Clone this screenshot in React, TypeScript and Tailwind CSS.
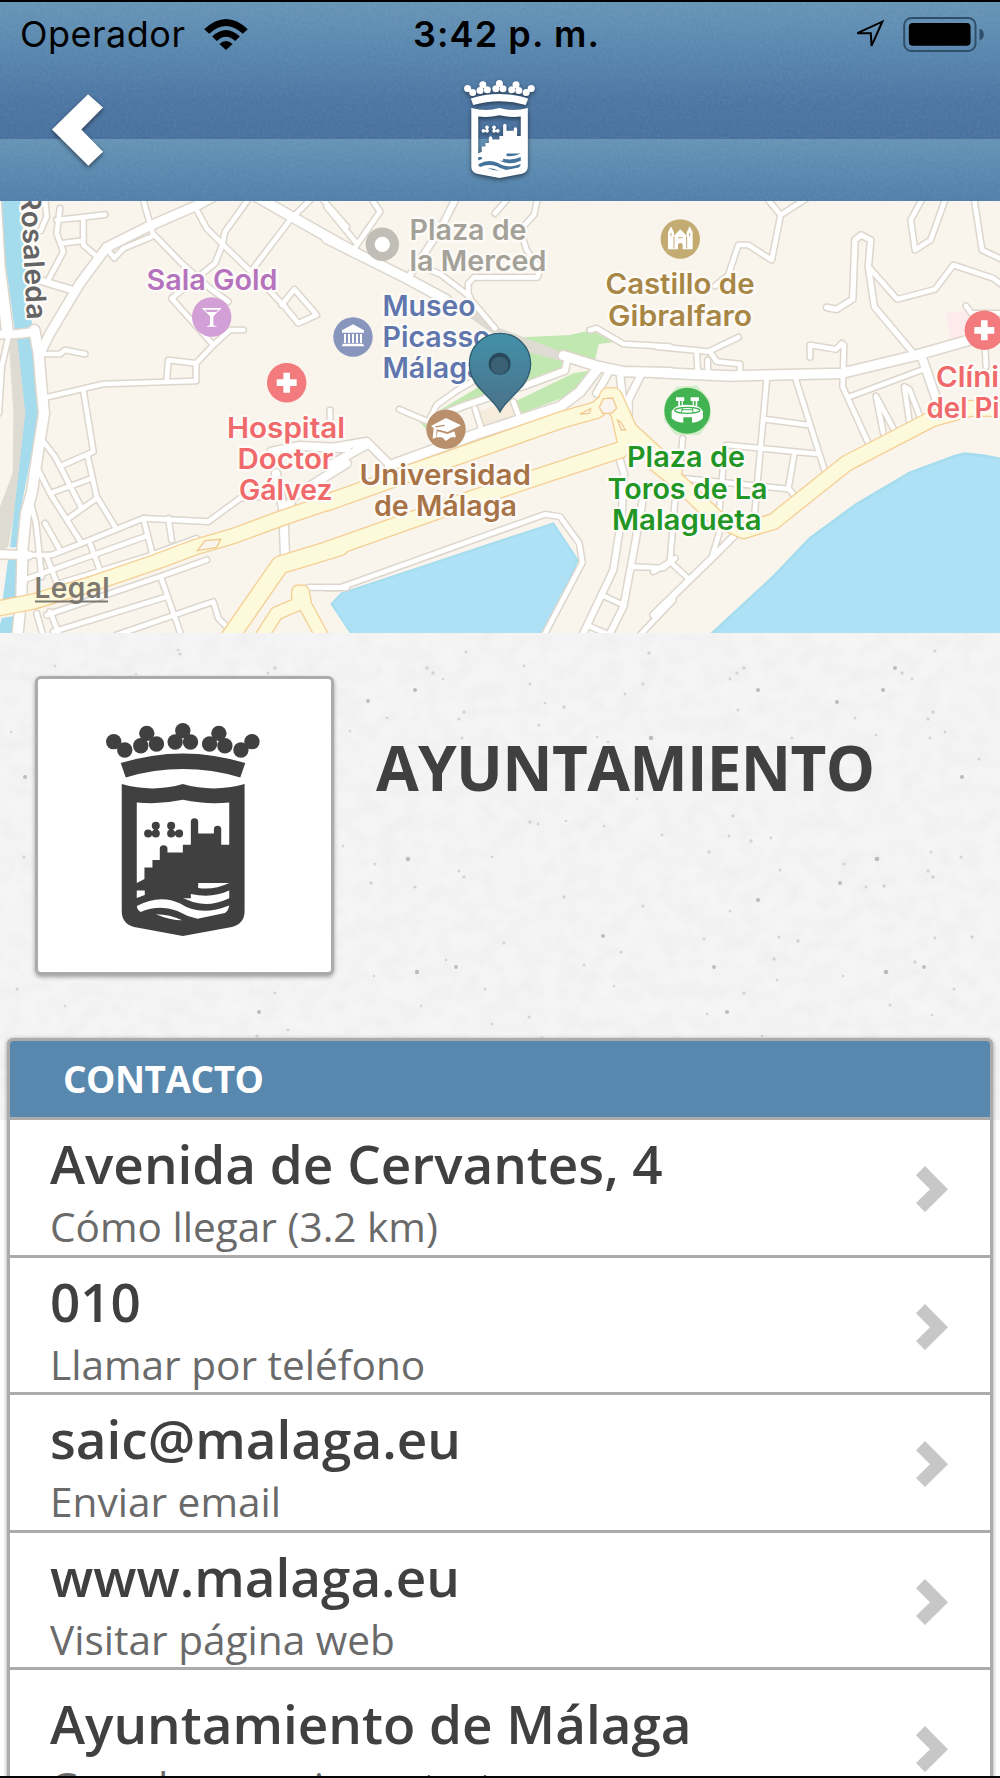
import type { ReactNode } from "react";

type Road = { o: number; w?: number; d: string };

type Label = { x: number; y: number; w: number; text: string; color: string };

type Contact = { title: string; subtitle: string };

// Map geometry is stored at 3x, in three strips starting at x = 0, 330 and 660
const strip = (o: number) => `translate(${o} 200) scale(0.33333)`;

const streets: Road[] = [
    { o: 0, w: 30, d: "M103 390 L116 460 L124 560 L132 640 L118 730 L95 880 L78 940 L68 1040 L64 1190 L52 1310" },
    { o: 0, w: 24, d: "M-10 404 L50 402 L105 396 M-10 1062 L85 1066" },
    { o: 0, w: 32, d: "M-14 0 L-2 200 L22 390" },
    { o: 0, w: 14, d: "M28 400 L5 500 L-4 640" },
    { o: 0, w: 26, d: "M125 450 L150 400 L240 250 L320 142 L440 82 L600 12 L640 -10" },
    { o: 0, w: 20, d: "M110 238 L210 268" },
    { o: 0, d: "M180 25 L170 100 L190 155 L145 240 M170 60 L245 52 L315 44 M250 55 L250 135 L285 165 M185 130 L250 122" },
    { o: 0, d: "M135 0 L140 50 L122 92 M430 0 L458 100 L545 190 L630 265 L685 305" },
    { o: 0, d: "M320 145 L343 174 L370 145 L455 110" },
    { o: 0, d: "M585 20 L620 85 L670 135 L760 222 L850 315 L895 370 L950 345 L883 268 L845 315" },
    { o: 0, d: "M740 5 L675 95 L665 140 L645 190 L515 295 L640 435 L690 390 L730 390" },
    { o: 0, d: "M640 435 L588 490 L588 543 L310 552 L140 592 M500 545 L505 480 L588 490" },
    { o: 0, w: 28, d: "M770 -10 L875 50 L1070 160" },
    { o: 0, d: "M930 0 L870 60 L760 205 M970 0 L1040 80" },
    { o: 0, d: "M130 462 L180 462 L195 450 L255 462" },
    { o: 0, d: "M250 570 L280 755 L190 795 M130 725 L165 770 L245 925 M262 765 L290 890 L345 980" },
    { o: 0, d: "M115 810 L150 880 L245 1030 M150 880 L275 835 M205 955 L290 895" },
    { o: 0, d: "M85 1065 L155 1065 L245 1030 L430 955 L625 965 L720 895 L840 885" },
    { o: 0, d: "M95 920 L108 970 L125 1130 M135 970 L180 1050 M140 1070 L175 1160 M430 955 L462 1080 M270 1030 L305 1125 M505 955 L515 1020" },
    { o: 0, d: "M80 1137 L280 1065 L440 1008 M180 1150 L440 1070 L590 1015" },
    { o: 0, d: "M110 1240 L130 1310 M150 1235 L180 1310 M140 1245 L480 1130 L620 1080" },
    { o: 0, d: "M160 1295 L500 1190 M482 1130 L545 1310 M350 1305 L640 1205 L655 1255 L690 1290" },
    { o: 0, w: 24, d: "M828 820 L850 930 L855 1070 M815 755 L900 738 L1040 745 M860 930 L880 890 L1040 790" },
    { o: 0, d: "M990 630 L990 700 M925 1162 L1040 1163" },
    { o: 330, w: 28, d: "M-10 115 L80 160 L230 235 L350 300" },
    { o: 330, d: "M130 5 L150 35 L70 150 M-10 20 L80 130 M530 0 L495 40" },
    { o: 330, w: 18, d: "M375 0 L330 90 L230 240" },
    { o: 330, d: "M622 0 L612 45 L570 90 L590 150 L630 210 L622 232 L432 232 L415 250 L415 290 L495 385 M250 190 L330 222 L420 290" },
    { o: 330, d: "M780 390 L800 385 L880 432 L1020 440" },
    { o: 330, w: 28, d: "M700 467 L800 498 L880 515 L1020 518" },
    { o: 330, w: 18, d: "M712 480 L705 512 L590 555 L400 618 L320 650" },
    { o: 330, d: "M430 543 L380 572 L320 615 L295 665 L208 628 M435 625 L455 690 M550 605 L567 650" },
    { o: 330, w: 28, d: "M180 797 L440 702 L690 620 L750 575 L800 510" },
    { o: 330, w: 22, d: "M-10 745 L110 725 L180 795 M-10 800 L110 735" },
    { o: 330, w: 20, d: "M935 520 L895 600 L895 640 M870 520 L878 600 M840 510 L800 580" },
    { o: 330, d: "M-10 1163 L30 1163 L645 943 L690 950 L748 1030 L757 1088 L640 1310" },
    { o: 330, w: 18, d: "M865 765 L882 820 L875 950 L850 1110 L755 1310 M940 890 L910 1060 L880 1220 L835 1310" },
    { o: 330, d: "M815 1185 L880 1215 M905 1100 L1000 1104 L1035 1075 M770 1275 L850 1310 M930 1305 L1030 1200" },
    { o: 660, w: 28, d: "M-10 518 L210 528 L545 520 L760 468 L930 420 L1040 400" },
    { o: 660, d: "M325 0 L362 45 L335 180 L265 135 L235 135 L205 225 L165 258 M362 45 L440 -5" },
    { o: 660, d: "M-10 440 L145 455 L235 412 M150 455 L170 485 L240 492 L240 520 M110 460 L113 510 M143 480 L143 510" },
    { o: 660, w: 16, d: "M500 322 L530 328 L578 298 L585 120 L603 105 L632 120 L625 200 L643 320 L760 460" },
    { o: 660, d: "M625 200 L712 298 L825 268 L880 195 L1000 235 L1040 265" },
    { o: 660, d: "M785 0 L752 60 L765 150 L812 120 L855 0 M943 0 L966 150 L1040 185" },
    { o: 660, d: "M450 472 L450 435 L528 448 L545 430 L552 435 L548 560 L625 730 M570 590 L790 508" },
    { o: 660, w: 24, d: "M785 470 L830 600" },
    { o: 660, d: "M670 700 L648 588 L705 695 M748 665 L733 560 L748 568 L780 650" },
    { o: 660, d: "M320 540 L283 950 M408 540 L495 815 M318 658 L445 675 M200 735 L475 762 M403 760 L385 865 L410 895 M70 835 L385 867" },
    { o: 660, d: "M195 740 L178 930 M68 715 L62 780 M45 900 L30 1085 L90 1140 M180 990 L155 1075 M-20 1115 L30 1085" },
    { o: 660, w: 18, d: "M-20 1245 L160 1070 L220 1010" },
    { o: 660, d: "M918 318 L935 340 L1040 340 M975 440 L978 500" },
];

const avenues: Road[] = [
    { o: 0, w: 42, d: "M-20 1228 L100 1205 L280 1150 L470 1085 L590 1040 L700 1008 L850 953 L1020 895" },
    { o: 0, w: 50, d: "M670 1340 L840 1095 L1020 1040" },
    { o: 0, w: 36, d: "M775 1325 L830 1240 L895 1212 L895 1175 M908 1175 L915 1215 L975 1325" },
    { o: 330, w: 46, d: "M-10 908 L250 815 L480 735 L700 658 L800 630 L845 590" },
    { o: 330, w: 46, d: "M-10 1050 L400 905 L620 832 L870 750" },
    { o: 330, w: 50, d: "M835 590 L870 640 L890 730 M850 590 L895 690 L1030 815" },
    { o: 660, w: 44, d: "M-20 785 L60 850 L170 955 L250 992 L340 965 L560 790 L820 655 L930 625 L1040 625" },
];

const labels: Label[] = [
    { x: 146.5, y: 289.5, w: 131, text: "Sala Gold", color: "#b673bd" },
    { x: 227, y: 437.5, w: 118, text: "Hospital", color: "#f0696b" },
    { x: 237.5, y: 468.5, w: 96, text: "Doctor", color: "#f0696b" },
    { x: 239, y: 499.5, w: 93.5, text: "Gálvez", color: "#f0696b" },
    { x: 409.5, y: 239.5, w: 117, text: "Plaza de", color: "#a3a198" },
    { x: 409.5, y: 270.5, w: 137, text: "la Merced", color: "#a3a198" },
    { x: 382.5, y: 316, w: 93, text: "Museo", color: "#6076ad" },
    { x: 382.5, y: 347, w: 108, text: "Picasso", color: "#6076ad" },
    { x: 382.5, y: 378.3, w: 101, text: "Málaga", color: "#6076ad" },
    { x: 605.5, y: 294, w: 149, text: "Castillo de", color: "#a88746" },
    { x: 608, y: 325.5, w: 144, text: "Gibralfaro", color: "#a88746" },
    { x: 359.5, y: 484.5, w: 171.5, text: "Universidad", color: "#a87346" },
    { x: 374, y: 516, w: 143, text: "de Málaga", color: "#a87346" },
    { x: 627, y: 467, w: 118, text: "Plaza de", color: "#229624" },
    { x: 607.5, y: 498.5, w: 160, text: "Toros de La", color: "#229624" },
    { x: 612, y: 529.8, w: 149.5, text: "Malagueta", color: "#229624" },
    { x: 936, y: 386.5, w: 63, text: "Clíni", color: "#f0696b" },
    { x: 926.5, y: 417.5, w: 73, text: "del Pi", color: "#f0696b" },
];

// x, y, radius of the dark flecks in the paper background (origin at the bottom of the map)
const flecks = [
    [180, 14, 1.6], [275, 28, 1.7], [268, 33, 1.5], [262, 39, 1.3], [427, 28, 1.8], [433, 33, 1.7], [443, 39, 1.3],
    [466, 12, 1.4], [415, 50, 2], [368, 61, 1.9], [387, 78, 1.3], [464, 72, 1.7], [459, 79, 1.6], [462, 98, 1.5],
    [25, 137, 2], [11, 92, 1.3], [24, 217, 1.5], [408, 219, 2.2], [375, 224, 1.5], [371, 243, 1.8], [415, 247, 1.6],
    [459, 231, 1.6], [464, 237, 1.7], [417, 332, 2.2], [456, 327, 1.9], [374, 336, 1.2], [485, 349, 1.5], [275, 353, 1.4],
    [259, 372, 2], [17, 349, 1.5], [65, 366, 1.3], [421, 366, 1.2], [446, 320, 1.3], [492, 217, 1.3], [350, 91, 1.2],
    [55, 26, 1.3], [82, 39, 1.2], [178, 10, 1.3], [136, 34, 1.1], [343, 206, 1.3], [492, 384, 1.4],
    [649, 13, 1.7], [524, 26, 1.4], [530, 44, 1.5], [643, 44, 1.5], [625, 54, 1.4], [564, 67, 1.8], [545, 63, 1.3],
    [539, 85, 1.6], [651, 98, 2.2], [597, 97, 1.3], [608, 102, 1.4], [744, 28, 1.7], [737, 33, 1.6], [730, 39, 1.4],
    [758, 50, 2], [738, 70, 1.5], [895, 28, 1.9], [902, 33, 1.8], [912, 39, 1.3], [883, 50, 2], [837, 62, 2],
    [855, 78, 1.5], [933, 72, 1.8], [928, 79, 1.7], [930, 98, 1.5], [962, 137, 2.1], [979, 119, 1.5], [792, 98, 1.4],
    [876, 95, 1.3], [935, 11, 1.6], [530, 182, 1.7], [538, 184, 1.4], [566, 181, 1.3], [604, 186, 1.3], [662, 195, 1.4],
    [729, 196, 1.4], [733, 176, 1.7], [751, 201, 1.7], [771, 198, 1.4], [709, 212, 1.7], [780, 230, 1.5], [877, 219, 2.3],
    [844, 224, 1.6], [931, 212, 1.5], [961, 217, 1.5], [928, 231, 1.7], [933, 237, 1.8], [884, 246, 1.8], [840, 243, 2],
    [866, 247, 1.4], [564, 257, 1.7], [643, 266, 1.5], [758, 260, 2.1], [730, 271, 1.5], [603, 296, 2], [621, 312, 1.6],
    [584, 325, 1.4], [714, 327, 1.9], [774, 319, 1.7], [798, 301, 1.7], [779, 297, 1.5], [704, 299, 1.4], [886, 332, 2.3],
    [924, 327, 1.9], [915, 322, 1.7], [935, 298, 1.5], [972, 297, 1.8], [777, 340, 1.4], [744, 353, 1.6], [954, 349, 1.6],
    [727, 372, 2.1], [707, 374, 1.3], [890, 365, 1.5], [529, 377, 1.5], [614, 346, 1.3], [843, 336, 1.3], [932, 375, 1.2],
    [637, 159, 1.2], [945, 92, 1.5], [504, 303, 1.6], [257, 396, 1.6], [288, 390, 1.4], [762, 396, 1.3], [542, 398, 1.5],
];

const contacts: Contact[] = [
    { title: "Avenida de Cervantes, 4", subtitle: "Cómo llegar (3.2 km)" },
    { title: "010", subtitle: "Llamar por teléfono" },
    { title: "saic@malaga.eu", subtitle: "Enviar email" },
    { title: "www.malaga.eu", subtitle: "Visitar página web" },
    { title: "Ayuntamiento de Málaga", subtitle: "Guardar en mis contactos" },
];

const Crest = ({ className }: { className: string }) => (
    <svg viewBox="318 249 461 638" className={className} fill="currentColor">
        {[
            [341, 305], [374, 330], [440, 280], [422, 317], [469, 312], [548, 272], [525, 306], [571, 306],
            [656, 280], [628, 312], [674, 317], [722, 330], [755, 305],
        ].map(([x, y]) => (
            <circle key={`${x}-${y}`} cx={x} cy={y} r="23" />
        ))}
        <path d="M362 369 Q548 311 735 369 L720 412 Q548 362 377 412 Z" />
        <path
            fillRule="evenodd"
            d="M365 432 Q458 458 548 432 Q640 458 733 432 V812 Q733 850 695 860 L548 887 L402 860 Q365 850 365 812 Z
               M410 487 V728 L433 716 V682 H457 V659 H479 V626 Q479 615 490 615 Q502 615 502 626 V637 H548 V614 H572 V545
               Q572 534 583 534 Q594 534 594 545 V580 H641 V568 Q641 557 652 557 Q663 557 663 568 V614 H687 V487
               Q620 494 548 479 Q480 494 410 487 Z"
        />
        <g>
            <circle cx="467" cy="557" r="12" />
            <circle cx="444" cy="580" r="12" />
            <circle cx="467" cy="580" r="12" />
            <circle cx="513" cy="557" r="12" />
            <circle cx="513" cy="580" r="12" />
            <circle cx="537" cy="580" r="12" />
            <path d="M461 557 H473 V585 H444 V575 H461 Z M507 557 H519 V575 H537 V585 H507 Z" />
        </g>
        {/* waves cut out of the shield */}
        <g className="fill-(--crest-gap)">
            <path d="M594 728 H687 Q640 750 594 743 Z" />
            <path d="M687 751 V774 Q640 796 600 790 Q575 786 549 774 H572 V761 Q635 775 687 751 Z" />
            <path d="M410 751 H434 V764 L410 773 Z" />
            <path d="M410 797 Q480 760 540 790 Q600 830 687 796 Q684 813 674 818 L592 835 Q560 828 530 811 Q475 792 422 815 Q412 810 410 797 Z" />
            <path d="M467 822 Q510 822 546 840 Q510 840 467 822 Z" />
        </g>
    </svg>
);

const StatusBar = () => (
    <div className="grid grid-cols-3 items-center h-17 pl-5 pr-4 font-['Inter',sans-serif] text-[36px] text-black">
        <div className="flex items-center gap-[18px]">
            <span className="-mt-1 tracking-[0.5px]">Operador</span>
            <svg viewBox="0 0 132 94" className="w-11 h-[31px] -mt-1">
                <path d="M0 31 Q66 -31 132 31 L117 45 Q66 -2 15 45 Z" />
                <path d="M24 53 Q66 13 108 53 L94 67 Q66 41 38 67 Z" />
                <path d="M46 76 Q66 57 86 76 L66 94 Z" />
            </svg>
        </div>
        <span className="-mt-1 pl-[9px] text-center font-semibold tracking-[1.1px] whitespace-nowrap">3:42 p. m.</span>
        <div className="flex items-center justify-end gap-[18px]">
            <svg viewBox="0 0 92 92" className="w-[31px] h-[31px] -mt-1" fill="none" stroke="#000" strokeWidth="6">
                <path d="M10 42 L84 8 L52 80 L50 42 Z" />
            </svg>
            <svg viewBox="0 0 244 106" className="w-[81px] h-[35px] -mt-1">
                <rect x="3" y="3" width="216" height="100" rx="22" fill="none" stroke="#2f4e69" strokeWidth="6" />
                <rect x="17" y="18" width="187" height="69" rx="12" />
                <path d="M231 35 Q244 40 244 53 Q244 66 231 71 Z" fill="#2f4e69" />
            </svg>
        </div>
    </div>
);

const Header = () => (
    <header className="relative h-[201px] border-t-2 border-black bg-[linear-gradient(to_bottom,#6494b7_0,#5686b0_45px,#4874a3_100px,#456f9f_137px,#6393b5_137px,#5889b1_165px,#4d7dab_199px)]">
        <svg className="absolute inset-0 w-full h-full opacity-12">
            <filter id="grain">
                <feTurbulence type="fractalNoise" baseFrequency="0.35" numOctaves="2" seed="4" />
                <feColorMatrix type="saturate" values="0" />
            </filter>
            <rect width="100%" height="100%" filter="url(#grain)" />
        </svg>
        <div className="relative">
            <StatusBar />
            <div className="grid grid-cols-3 items-start">
                <svg viewBox="157 282 153 215" className="ml-[52px] mt-6 w-[51px] h-[72px] overflow-visible drop-shadow-[0_2px_2px_rgba(0,0,0,0.5)]" fill="#fff">
                    <path d="M157 388 L265 282 L310 322 L245 388 L310 455 L266 497 Z" />
                </svg>
                <div className="flex justify-center pt-[10px] text-white [--crest-gap:#44749c] drop-shadow-[0_2px_2px_rgba(0,0,0,0.5)]">
                    <Crest className="w-[71px] h-[98px]" />
                </div>
            </div>
        </div>
    </header>
);

const Poi = ({ x, y, r = 19.7, color, children }: { x: number; y: number; r?: number; color: string; children?: ReactNode }) => (
    <g transform={`translate(${x} ${y})`}>
        <circle r={r} fill={color} />
        <g fill="#fff" transform="scale(0.33333)">{children}</g>
    </g>
);

const Plus = () => <path d="M-10 -30 H10 V-10 H30 V10 H10 V30 H-10 V10 H-30 V-10 H-10 Z" />;

const MapView = () => (
    <svg viewBox="0 201 1000 432" className="block w-full h-[432px] bg-[#f9f5ed]">
        <defs>
            <linearGradient id="pin" x1="0" y1="0" x2="0" y2="1">
                <stop offset="0" stopColor="#4391a9" />
                <stop offset="1" stopColor="#4a7189" />
            </linearGradient>
            <filter id="soft"><feGaussianBlur stdDeviation="2" /></filter>
        </defs>

        {/* water and ground areas */}
        <g transform={strip(0)}>
            <path fill="#dedbd3" d="M25 400 L55 415 L78 640 L55 870 L25 1040 L-10 1060 L0 920 L38 820 L40 640 Z" />
            <path fill="#a4dbed" d="M-10 0 H60 L97 385 L44 388 Z M52 418 L96 412 L116 650 L62 930 L52 1042 H30 L50 870 L76 640 Z M24 1080 H60 L48 1195 L8 1200 Z M5 1255 L42 1248 L38 1310 H-10 Z" />
        </g>
        <g transform={strip(330)}>
            <path fill="#c2e8b1" d="M575 412 L720 405 L785 390 L850 427 L806 432 L795 482 L700 470 L690 520 L590 548 Z M325 633 L445 562 L490 590 Z M558 603 L730 520 L780 512 L720 585 L570 642 Z M270 665 L300 665 L290 690 Z" />
            <path fill="#dedbd3" d="M400 340 L440 325 L500 380 L580 412 L695 455 L690 482 L590 455 L480 395 Z" />
            <path fill="#f5ecdd" d="M445 635 L545 598 L552 650 L460 682 Z" />
            <path fill="#aee1f5" stroke="#a5dcee" strokeWidth="6" d="M5 1212 L35 1180 L670 970 L743 1080 L640 1310 H70 Z" />
        </g>
        <g transform={strip(660)}>
            <path fill="#fcebea" d="M858 335 L935 333 L935 410 L870 417 Z" />
            <path fill="#aee1f5" stroke="#a5dcee" strokeWidth="8" d="M140 1315 L340 1130 L450 1015 L590 912 L750 818 L885 768 L915 761 L970 767 L1040 780 V1320 Z" />
            <path fill="#d3ecc9" d="M50 560 L110 556 L150 600 L152 660 L118 706 L45 704 L12 660 L16 600 Z" />
        </g>

        <g fill="none" strokeLinejoin="round" strokeLinecap="round">
            {streets.map((r, i) => (
                <path key={i} transform={strip(r.o)} d={r.d} stroke="#ddd6cc" strokeWidth={(r.w ?? 14) + 9} />
            ))}
            {streets.map((r, i) => (
                <path key={i} transform={strip(r.o)} d={r.d} stroke="#ffffff" strokeWidth={r.w ?? 14} />
            ))}
            {avenues.map((r, i) => (
                <path key={i} transform={strip(r.o)} d={r.d} stroke="#f5cf95" strokeWidth={(r.w ?? 40) + 8} />
            ))}
            {avenues.map((r, i) => (
                <path key={i} transform={strip(r.o)} d={r.d} stroke="#fcfada" strokeWidth={r.w} />
            ))}
        </g>
        <g fill="#f9f5ed" stroke="#f4c98f" strokeWidth="4">
            <path transform={strip(0)} d="M592 1052 L615 1022 L662 1018 L650 1042 Z" />
            <path transform={strip(330)} d="M820 596 L848 594 L860 625 L845 640 L818 640 L808 622 Z M750 642 L782 626 L778 640 Z M862 660 L872 665 L886 690 L874 690 Z" />
        </g>

        <Poi x={382.3} y={244.3} r={16.7} color="#c0beb6">
            <circle r="23" />
        </Poi>
        <Poi x={211.7} y={317} color="#d29fd6">
            <path fillRule="evenodd" d="M-30 -27 H30 L5 -2 V24 L17 29 H-17 L-5 24 V-2 Z M-21 -22 L-14 -15 H14 L21 -22 Z" />
        </Poi>
        <Poi x={286.7} y={382.7} color="#f37b7d"><Plus /></Poi>
        <Poi x={353} y={337} color="#8896bd">
            <path d="M0 -38 L33 -20 V-13 H-33 V-20 Z M-27 -9 H-21 V18 H-27 Z M-15 -9 H-9 V18 H-15 Z M-3 -9 H3 V18 H-3 Z M9 -9 H15 V18 H9 Z M21 -9 H27 V18 H21 Z M-30 20 H30 L34 28 H-34 Z" />
        </Poi>
        <Poi x={446} y={429.3} color="#b9906b">
            <path d="M-45 -10 L0 -34 L45 -12 L5 8 L-28 0 L-30 25 L-40 28 L-37 -4 Z M-25 6 L5 14 L25 6 L30 24 L15 24 L0 35 L-12 24 L-29 24 Z" />
            <path d="M-32 -7 L-4 -12" fill="none" stroke="#b9906b" strokeWidth="4" />
        </Poi>
        <Poi x={680.3} y={239} color="#c3ab72">
            <path d="M-37 31 V-20 L-28 -38 L-19 -20 V-10 L0 -29 L19 -10 V-20 L28 -38 L37 -20 V31 H7 V16 Q0 8 -7 16 V31 Z" />
            <path d="M-19 -8 V28 M19 -8 V28 M-7 -4 H7 M-28 -18 V-8 M28 -18 V-8" stroke="#c3ab72" strokeWidth="3" />
        </Poi>
        <Poi x={687.3} y={410.7} r={23} color="#41b451">
            <path d="M-34 -40 H-9 V-29 H-34 Z M10 -40 H35 V-29 H10 Z M-27 -29 H-22 V-14 H-27 Z M-17 -29 H-13 V-16 H-17 Z M16 -29 H20 V-16 H16 Z M25 -29 H30 V-14 H25 Z" />
            <path d="M-47 2 Q-40 -18 0 -18 Q40 -18 47 2 V22 Q38 34 14 36 V20 H-12 V36 Q-38 34 -47 22 Z" />
            <ellipse cy="-1" rx="38" ry="9" fill="none" stroke="#41b451" strokeWidth="4" />
            <path d="M-18 -3 H18 M-14 -10 L-18 7 M14 -10 L18 7" stroke="#41b451" strokeWidth="3" />
        </Poi>
        <Poi x={984.3} y={330.3} color="#f37b7d"><Plus /></Poi>

        <g className="font-['Inter',sans-serif] font-semibold text-[28px]" stroke="#fdfbf7" strokeWidth="4.5" strokeLinejoin="round" paintOrder="stroke">
            {labels.map((l) => (
                <text key={l.text + l.x} x={l.x} y={l.y} textLength={l.w} lengthAdjust="spacingAndGlyphs" fill={l.color}>{l.text}</text>
            ))}
            <text transform="translate(20.5 193) rotate(87)" textLength="127" fill="#646464">Rosaleda</text>
            <text x="34.5" y="597.5" textLength="75" fill="#7d7970" strokeWidth="0">Legal</text>
        </g>
        <path d="M35 601.5 H108" stroke="#7d7970" strokeWidth="2" />

        <g transform={strip(330)}>
            <path d="M510 640 Q490 600 440 560 Q415 530 420 480 H600 Q605 530 580 560 Q530 600 510 640 Z" fill="#000" opacity="0.3" filter="url(#soft)" />
            <path d="M510 635 C492 595 418 560 418 491 A92 91 0 0 1 602 491 C602 560 528 595 510 635 Z" fill="url(#pin)" stroke="#315f75" strokeWidth="4" />
            <circle cx="509" cy="491" r="33" fill="#28485c" />
            <circle cx="509" cy="496" r="26" fill="#3a6274" />
        </g>
    </svg>
);

const Paper = () => (
    <svg viewBox="0 0 1000 487" className="absolute inset-x-0 top-0 w-full h-[487px] bg-[#f5f5f5]">
        <filter id="fibres" x="0" y="0" width="100%" height="100%">
            <feTurbulence type="fractalNoise" baseFrequency="0.05 0.06" numOctaves="4" seed="9" />
            <feColorMatrix type="matrix" values="0 0 0 0 0.6  0 0 0 0 0.6  0 0 0 0 0.6  0.25 0 0 0 -0.08" />
        </filter>
        <rect width="1000" height="487" filter="url(#fibres)" />
        {flecks.map(([x, y, r], i) => (
            <circle key={i} cx={x} cy={y + 7} r={r} fill="#adadad" opacity={r > 1.8 ? 0.8 : 0.45} />
        ))}
    </svg>
);

const ContactRow = ({ title, subtitle, last }: Contact & { last: boolean }) => (
    <li className={`flex justify-between items-start border-[#ababab] pl-10 pr-[42px] ${last ? "h-[160px] pt-6" : "h-[137.5px] pt-3.5 border-b-3"}`}>
        <div>
            <p className="text-[53px] leading-[60px] font-semibold text-[#404040]">{title}</p>
            <p className="mt-[8px] text-[40.6px] leading-[50px] text-[#6a6a6a]">{subtitle}</p>
        </div>
        <svg viewBox="0 0 96 138" className="w-8 h-[46px] mt-8" fill="#c7c7c7">
            <path d="M0 28 L27 0 L96 70 L27 138 L0 111 L42 70 Z" />
        </svg>
    </li>
);

export default function App() {
    return (
        <div className="relative w-[1000px] h-[1778px] overflow-hidden bg-white font-['Open_Sans','Noto_Sans',sans-serif]">
            <Header />
            <MapView />
            <div className="relative">
                <Paper />
                <section className="relative flex h-[405px] pl-[35px] pt-[43px]">
                    <div className="flex shrink-0 justify-center w-[299px] h-[299px] pt-[44px] pr-[4px] rounded-md border-3 border-[#ababab] bg-white text-[#404040] [--crest-gap:#fff] shadow-[0_2px_4px_rgba(0,0,0,0.35)]">
                        <Crest className="w-[154px] h-[213px]" />
                    </div>
                    <h1 className="ml-[42px] mt-[56px] h-[70px] text-[62px] tracking-[-0.7px] leading-[70px] font-bold text-[#404040]">AYUNTAMIENTO</h1>
                </section>
                <section className="relative mx-[7px] rounded-t-md border-3 border-[#ababab] bg-white shadow-[0_1px_4px_rgba(0,0,0,0.4)]">
                    <h2 className="h-[79px] pl-[53px] border-b-3 border-[#ababab] rounded-t-[3px] bg-[#5888ae] text-[37px] tracking-[-0.5px] leading-[76px] font-bold text-white">CONTACTO</h2>
                    <ul>
                        {contacts.map((c, i) => (
                            <ContactRow key={c.title} {...c} last={i === contacts.length - 1} />
                        ))}
                    </ul>
                </section>
            </div>
            <div className="absolute bottom-0 inset-x-0 h-0.5 bg-black" />
        </div>
    );
}
